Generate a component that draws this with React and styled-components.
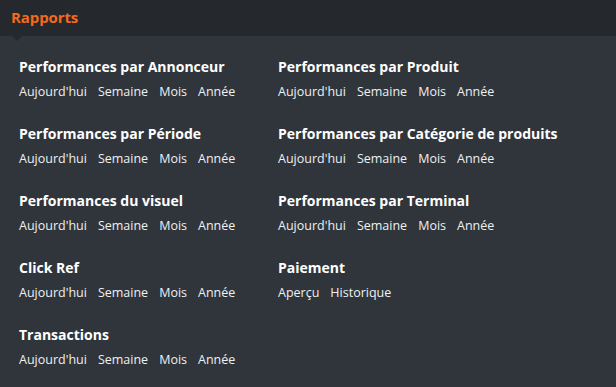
import React from 'react';
import styled, { createGlobalStyle } from 'styled-components';

const GlobalStyle = createGlobalStyle`
  html, body {
    margin: 0;
    padding: 0;
    background: #30353b;
  }
  body {
    font-family: "Open Sans", "Noto Sans", sans-serif;
  }
`;

const Panel = styled.div`
  width: 616px;
  height: 387px;
  background: #30353b;
  overflow: hidden;
`;

const Header = styled.div`
  position: relative;
  height: 36px;
  background: #25282d;
  display: flex;
  align-items: center;
  padding-left: 11px;

  &::after {
    content: '';
    position: absolute;
    left: 12px;
    bottom: -5px;
    border-left: 5px solid transparent;
    border-right: 5px solid transparent;
    border-top: 5px solid #25282d;
  }
`;

const HeaderTitle = styled.h1`
  margin: 0;
  margin-top: -3px;
  font-size: 15px;
  font-weight: 700;
  color: #f26a1b;
  letter-spacing: -0.1px;
`;

const Grid = styled.div`
  display: grid;
  grid-template-columns: 259px 1fr;
  row-gap: 23px;
  padding: 21px 0 0 19px;
`;

const Section = styled.div`
  display: flex;
  flex-direction: column;
`;

const SectionTitle = styled.h2`
  margin: 0;
  font-size: 14px;
  font-weight: 700;
  line-height: 20px;
  color: #ffffff;
`;

const Links = styled.div`
  display: flex;
  gap: 11px;
  margin-top: 6px;
`;

const LinkItem = styled.a`
  font-size: 12.5px;
  line-height: 18px;
  color: #eef0f2;
  text-decoration: none;
  cursor: pointer;
`;

const periods = ["Aujourd'hui", 'Semaine', 'Mois', 'Année'];

const sections = [
  { title: 'Performances par Annonceur', links: periods },
  { title: 'Performances par Produit', links: periods },
  { title: 'Performances par Période', links: periods },
  { title: 'Performances par Catégorie de produits', links: periods },
  { title: 'Performances du visuel', links: periods },
  { title: 'Performances par Terminal', links: periods },
  { title: 'Click Ref', links: periods },
  { title: 'Paiement', links: ['Aperçu', 'Historique'] },
  { title: 'Transactions', links: periods },
];

const App = () => (
  <Panel>
    <GlobalStyle />
    <Header>
      <HeaderTitle>Rapports</HeaderTitle>
    </Header>
    <Grid>
      {sections.map((s) => (
        <Section key={s.title}>
          <SectionTitle>{s.title}</SectionTitle>
          <Links>
            {s.links.map((l) => (
              <LinkItem key={l}>{l}</LinkItem>
            ))}
          </Links>
        </Section>
      ))}
    </Grid>
  </Panel>
);

export default App;
